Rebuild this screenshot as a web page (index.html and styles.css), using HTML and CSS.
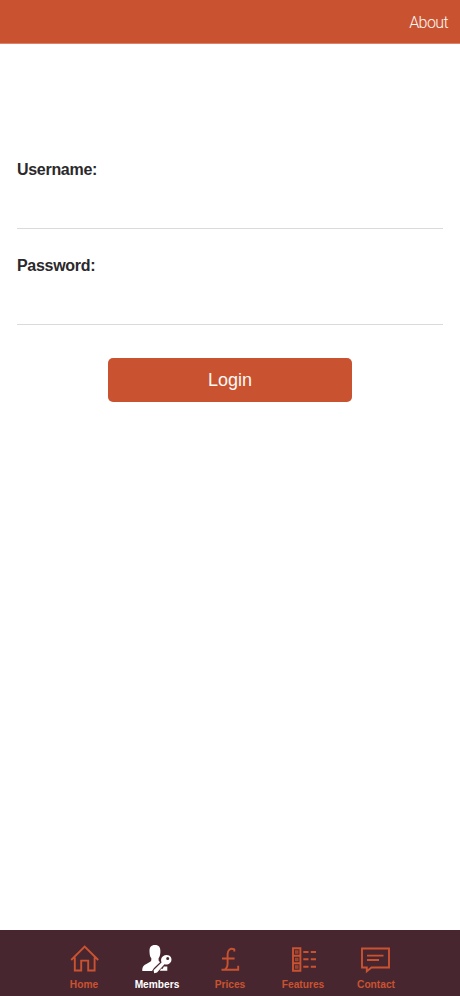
FILE: index.html
```html
<!DOCTYPE html>
<html lang="en">
<head>
<meta charset="utf-8">
<title>Members</title>
<link rel="stylesheet" href="styles.css">
</head>
<body>
<header class="topbar"><a class="about">About</a></header>
<main class="content">
  <form class="login">
    <label class="label" for="user">Username:</label>
    <input class="field" id="user" type="text">
    <label class="label" for="pass">Password:</label>
    <input class="field" id="pass" type="password">
    <button class="submit" type="button">Login</button>
  </form>
</main>
<nav class="tabs">
  <a class="tab">
    <svg class="icon" viewBox="0 0 32 32"><path d="M3.2 17 16.7 3.6 30.2 17M6.8 14.5V27.5H13.2V17.6H20.2V27.5H26.6V14.5"/></svg>
    <span class="name">Home</span>
  </a>
  <a class="tab active">
    <svg class="icon" viewBox="0 0 32 32"><path class="solid" d="M14 2C18 2 19.6 4.7 19.4 8.7C19.3 11.5 18.8 13.8 17.6 15.2V17.5L19 19.2L13 25L11 28H1.3C1.1 23.7 2.6 22.1 6.2 20.4C8.8 19.3 10.3 18.4 10.3 17V15.2C8.9 13.6 8.6 11.3 8.5 8.4C8.3 4.4 10 2 14 2Z"/><path class="solid" fill-rule="evenodd" d="M22 13.2C24.3 11.5 28.3 11.5 29.9 14.2C31.3 17 30 20.1 27.2 21.2C25.9 21.7 24.7 21.7 23.5 21.3L16 29.5L13.2 30.3L12.6 27.2L20.5 19.4C19.6 17 20 14.7 22 13.2ZM26.7 13.9A1.5 1.5 0 1 0 26.7 16.9A1.5 1.5 0 1 0 26.7 13.9ZM22.8 23.5H26.3V27.8H18.8L20 25.7H21.8Z"/></svg>
    <span class="name">Members</span>
  </a>
  <a class="tab">
    <svg class="icon" viewBox="0 0 32 32"><path d="M20.3 8.6V6.3C16.2 4.4 13.6 7.5 13.6 11V20.5C13.6 23.5 12.7 25.5 10.6 26.7M7.5 26.7H24.2V22.8M8 15.5H20.6"/></svg>
    <span class="name">Prices</span>
  </a>
  <a class="tab">
    <svg class="icon" viewBox="0 0 32 32"><path d="M6 5.3H13.4V27.7H6ZM6 12.8H13.4M6 20.3H13.4"/><path class="dots" d="M8.7 8H10.7V10H8.7ZM8.7 15.5H10.7V17.5H8.7ZM8.7 23H10.7V25H8.7Z"/><path d="M16.3 9H21.5M23.8 9H29M16.3 16.3H21.5M23.8 16.3H29M16.3 23.8H21.5M23.8 23.8H29"/></svg>
    <span class="name">Features</span>
  </a>
  <a class="tab">
    <svg class="icon" viewBox="0 0 32 32"><path d="M2 5.5H29V24.5H11.5L6.8 28.3V24.5H2ZM7 12.6H23.5M7 17H19"/></svg>
    <span class="name">Contact</span>
  </a>
</nav>
</body>
</html>
```
FILE: styles.css
```css
* { box-sizing: border-box; }
body {
  margin: 0;
  height: 996px;
  display: flex;
  flex-direction: column;
  background: #fff;
  font-family: "Liberation Sans", Arial, sans-serif;
}
.topbar {
  height: 44px;
  display: flex;
  justify-content: flex-end;
  align-items: center;
  padding: 2px 12px 0 0;
  background: #c95331;
  border-bottom: 1px solid #dc8266;
}
.about {
  color: #fff8f2;
  font-family: Roboto, "Liberation Sans", sans-serif;
  font-weight: 300;
  font-size: 16px;
  letter-spacing: -0.6px;
}
.content { flex: 1; padding: 115px 17px 0; }
.login { display: flex; flex-direction: column; }
.label {
  height: 21px;
  line-height: 21px;
  color: #2b292b;
  font-size: 16px;
  font-weight: bold;
  letter-spacing: -0.3px;
}
.field {
  height: 49px;
  margin: 0 0 26px;
  padding: 0;
  border: 0;
  border-bottom: 1px solid #dadada;
  background: transparent;
  outline: none;
}
.submit {
  width: 244px;
  height: 44px;
  align-self: center;
  margin-top: 7px;
  padding: 0;
  border: 0;
  border-radius: 5px;
  background: #c95331;
  color: #fff9f4;
  font: 18px "Liberation Sans", Arial, sans-serif;
}
.tabs {
  height: 66px;
  display: flex;
  justify-content: center;
  background: #48262f;
}
.tab {
  width: 73px;
  padding-top: 13px;
  display: flex;
  flex-direction: column;
  align-items: center;
  color: #c95331;
}
.active { color: #fff; }
.icon {
  width: 32px;
  height: 32px;
  fill: none;
  stroke: currentColor;
  stroke-width: 1.9;
}
.solid { fill: currentColor; stroke: none; }
.dots { stroke-width: 1.6; opacity: 0.7; }
.name {
  margin-top: 3px;
  font-size: 10.2px;
  line-height: 13px;
  font-weight: bold;
}
```
